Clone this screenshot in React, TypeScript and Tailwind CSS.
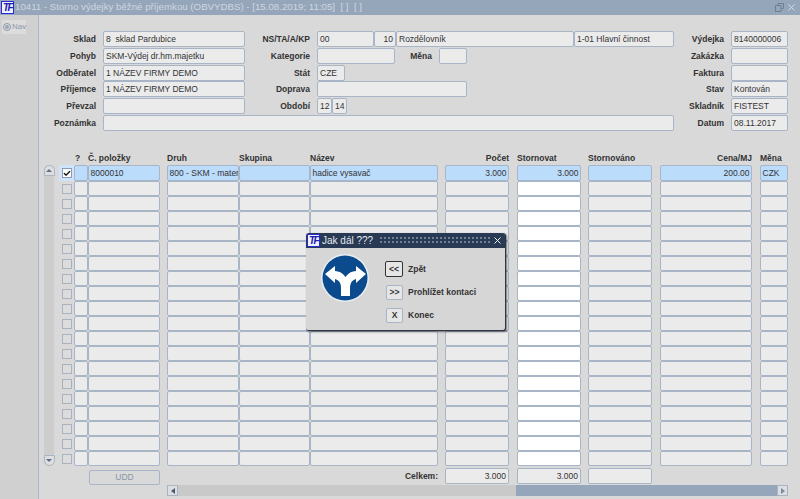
import { Check, X } from 'lucide-react';

const font = 'font-["Liberation_Sans",Arial,sans-serif]';

const fieldBase =
  'flex h-[16px] shrink-0 items-center overflow-hidden whitespace-pre rounded-[2px] border border-[#a8b5c7] bg-[#ebebeb] px-[2px] text-[8.500px] text-[#333]';

function Field({ w, text, right }: { w: string; text?: string; right?: boolean }) {
  return <div className={`${fieldBase} ${w} ${right ? 'justify-end' : ''}`}>{text}</div>;
}

function Label({ w, text }: { w: string; text: string }) {
  return (
    <div className={`${w} shrink-0 whitespace-nowrap pr-[7px] text-right text-[8.5px] font-bold leading-[16px] text-[#333]`}>
      {text}
    </div>
  );
}

const columns = [
  { cls: 'w-[14px]', title: '?', align: 'pl-[1px] text-left' },
  { cls: 'w-[72px]', title: 'Č. položky', align: 'text-left' },
  { cls: 'w-[72px] ml-[7px]', title: 'Druh', align: 'text-left' },
  { cls: 'w-[71px]', title: 'Skupina', align: 'text-left' },
  { cls: 'w-[128px]', title: 'Název', align: 'text-left' },
  { cls: 'w-[64px] ml-[7px]', title: 'Počet', align: 'text-right' },
  { cls: 'w-[64px] ml-[8px]', title: 'Stornovat', align: 'text-left' },
  { cls: 'w-[64px] ml-[7px]', title: 'Stornováno', align: 'text-left' },
  { cls: 'w-[92px] ml-[8px]', title: 'Cena/MJ', align: 'text-right' },
  { cls: 'w-[28px] ml-[8px]', title: 'Měna', align: 'text-left' },
];

const firstRow = ['', '8000010', '800 - SKM - materi', '', 'hadice vysavač', '3.000', '3.000', '', '200.00', 'CZK'];
const rightCols = [5, 6, 8];

function TableRow({ index }: { index: number }) {
  const active = index === 0;
  return (
    <div className={`flex ${active ? 'h-[16px]' : 'h-[15px]'}`}>
      {columns.map((c, i) => (
        <div
          key={c.title}
          className={`flex h-full shrink-0 items-center overflow-hidden whitespace-nowrap rounded-[2px] border border-[#a8b5c7] px-[1.500px] text-[8.500px] text-[#333] ${c.cls} ${
            rightCols.includes(i) ? 'justify-end' : ''
          } ${active ? 'bg-[#bcdcfb]' : i === 6 ? 'bg-white' : 'bg-[#ebebeb]'}`}
        >
          {active ? firstRow[i] : ''}
        </div>
      ))}
    </div>
  );
}

function RoadSign() {
  return (
    <svg width="48" height="48" viewBox="0 0 48 48">
      <circle cx="24" cy="24" r="24" fill="#e8edf2" />
      <circle cx="24" cy="24" r="22.500" fill="#0b4a8d" />
      <path
        d="M20 42 V34 C20 29 18 26 14 25 V29 L4 20 L14 12 V17 C18 17 22 19 24.500 23 C27 19 31 17 35 17 V12 L45 20 L35 29 V25 C31 26 29 29 29 34 V42 Z"
        fill="#fff"
      />
    </svg>
  );
}

function TfLogo() {
  return (
    <div className="flex h-[13px] w-[13px] shrink-0 items-center justify-center border border-[#2a2ad0] bg-[#eef0ff] text-[10px] font-bold italic leading-none tracking-[-1.500px] text-[#2020b0]">
      TF
    </div>
  );
}

function DialogButton({ text, label, focused }: { text: string; label: string; focused?: boolean }) {
  return (
    <div className="flex items-center">
      <div
        className={`flex items-center justify-center rounded-[2px] border bg-[#e6e6e6] text-[8.5px] font-bold text-[#333] ${
          focused ? 'h-[16px] w-[18px] border-[#333]' : 'ml-[1px] h-[15px] w-[17px] border-[#a8b5c7]'
        }`}
      >
        {text}
      </div>
      <span className="ml-[5px] text-[8.5px] font-bold text-[#333]">{label}</span>
    </div>
  );
}

export default function App() {
  return (
    <div className={`relative flex h-[499px] w-[800px] flex-col overflow-hidden bg-[#d9d9d9] ${font}`}>
      <div className="flex h-[15px] shrink-0 items-center bg-[#95a6bb] pl-[1px] pr-[3px]">
        <TfLogo />
        <span className="ml-[1px] whitespace-pre text-[9.700px] text-[#cfd6df]">
          10411 - Storno výdejky běžné příjemkou (OBVYDBS) - [15.08.2019; 11:05]  [ ]  [ ]
        </span>
        <svg className="ml-auto" width="9" height="9" viewBox="0 0 9 9" fill="none" stroke="#6f7f93">
          <path d="M3 2.500 V.5 H8.500 V5.500 H6.500 M.5 2.500 H6 V8.500 H.5 Z" />
        </svg>
        <X className="ml-[2px] text-[#dfe4ea]" size={11} strokeWidth={2} />
      </div>

      <div className="flex min-h-0 flex-1">
        <div className="w-[39px] shrink-0 border-r border-[#a8b5c7] bg-[#d0d0d0] pt-[5px]">
          <div className="ml-[2px] flex h-[14px] w-[24px] items-center bg-[#dcdcdc] pl-[1px]">
            <div className="flex h-[8px] w-[8px] shrink-0 items-center justify-center rounded-full border border-[#8d9bae]">
              <div className="h-[4px] w-[4px] rounded-full bg-[#9aa7b8]" />
            </div>
            <span className="ml-[1px] text-[8px] text-[#8b98aa]">Nav</span>
          </div>
        </div>

        <div className="flex min-w-0 flex-1 flex-col pt-[16px]">
          <div className="grid grid-rows-[17px_17px_16px_17px_17px_16px]">
            <div className="flex">
              <Label w="w-[64px]" text="Sklad" />
              <Field w="w-[142px]" text="8  sklad Pardubice" />
              <Label w="w-[72px]" text="NS/TA/A/KP" />
              <Field w="w-[57px]" text="00" />
              <Field w="w-[22px]" right text="10" />
              <Field w="w-[178px]" text="Rozdělovník" />
              <Field w="w-[100px]" text="1-01 Hlavní činnost" />
              <Label w="w-[57px]" text="Výdejka" />
              <Field w="w-[57px]" text="8140000006" />
            </div>
            <div className="flex">
              <Label w="w-[64px]" text="Pohyb" />
              <Field w="w-[142px]" text="SKM-Výdej dr.hm.majetku" />
              <Label w="w-[72px]" text="Kategorie" />
              <Field w="w-[78px]" />
              <Label w="w-[44px]" text="Měna" />
              <Field w="w-[28px]" />
              <div className="w-[207px] shrink-0" />
              <Label w="w-[57px]" text="Zakázka" />
              <Field w="w-[57px]" />
            </div>
            <div className="flex">
              <Label w="w-[64px]" text="Odběratel" />
              <Field w="w-[142px]" text="1 NÁZEV FIRMY DEMO" />
              <Label w="w-[72px]" text="Stát" />
              <Field w="w-[28px]" text="CZE" />
              <div className="w-[329px] shrink-0" />
              <Label w="w-[57px]" text="Faktura" />
              <Field w="w-[57px]" />
            </div>
            <div className="flex">
              <Label w="w-[64px]" text="Příjemce" />
              <Field w="w-[142px]" text="1 NÁZEV FIRMY DEMO" />
              <Label w="w-[72px]" text="Doprava" />
              <Field w="w-[150px]" />
              <div className="w-[207px] shrink-0" />
              <Label w="w-[57px]" text="Stav" />
              <Field w="w-[57px]" text="Kontován" />
            </div>
            <div className="flex">
              <Label w="w-[64px]" text="Převzal" />
              <Field w="w-[142px]" />
              <Label w="w-[72px]" text="Období" />
              <Field w="w-[15px]" text="12" />
              <Field w="w-[15px]" text="14" />
              <div className="w-[327px] shrink-0" />
              <Label w="w-[57px]" text="Skladník" />
              <Field w="w-[57px]" text="FISTEST" />
            </div>
            <div className="flex">
              <Label w="w-[64px]" text="Poznámka" />
              <Field w="w-[571px]" />
              <Label w="w-[57px]" text="Datum" />
              <Field w="w-[57px]" text="08.11.2017" />
            </div>
          </div>

          <div className="mt-[20px] flex pl-[5px]">
            <div className="mt-[14px] flex h-[301px] w-[10px] shrink-0 flex-col items-center justify-between rounded-full bg-[#cdcdcd]">
              <div className="flex h-[11px] w-[11px] shrink-0 items-center justify-center rounded-t-full border border-[#a8b5c7] bg-[#dedede]">
                <div className="h-0 w-0 border-x-[3px] border-b-[3px] border-x-transparent border-b-[#5d6f87]" />
              </div>
              <div className="flex h-[11px] w-[11px] shrink-0 items-center justify-center rounded-b-full border border-[#a8b5c7] bg-[#dedede]">
                <div className="h-0 w-0 border-x-[3px] border-t-[3px] border-x-transparent border-t-[#5d6f87]" />
              </div>
            </div>

            <div className="ml-[5px] mt-[14px] flex w-[15px] shrink-0 flex-col">
              {Array.from({ length: 20 }, (_, i) => (
                <div key={i} className={`flex items-center justify-center ${i === 0 ? 'h-[16px] bg-[#cfe4fa]' : 'h-[15px]'}`}>
                  <div className={`flex h-[10px] w-[10px] items-center justify-center border ${i === 0 ? 'border-[#8d9bae] bg-white' : 'border-[#a9b3c0] bg-[#dcdcdc]'}`}>
                    {i === 0 && <Check className="text-[#111]" size={9} strokeWidth={4} />}
                  </div>
                </div>
              ))}
            </div>

            <div className="flex flex-col">
              <div className="flex h-[14px]">
                {columns.map((c) => (
                  <div
                    key={c.title}
                    className={`${c.cls} ${c.align} shrink-0 whitespace-nowrap text-[8.5px] font-bold leading-[14px] text-[#333]`}
                  >
                    {c.title}
                  </div>
                ))}
              </div>
              {Array.from({ length: 20 }, (_, i) => (
                <TableRow key={i} index={i} />
              ))}

              <div className="mt-[2px] flex h-[15px]">
                <div className="ml-[15px] mt-[2px] flex h-[15px] w-[71px] shrink-0 items-center justify-center rounded-[2px] border border-[#a8b5c7] text-[8.500px] text-[#8795a8]">
                  UDD
                </div>
                <div className="w-[285px] shrink-0 pr-[7px] text-right text-[8.5px] font-bold leading-[16px] text-[#333]">
                  Celkem:
                </div>
                <Field w="w-[64px]" right text="3.000" />
                <div className="w-[8px] shrink-0" />
                <Field w="w-[64px]" right text="3.000" />
                <div className="w-[7px] shrink-0" />
                <Field w="w-[64px]" />
              </div>
              <div className="ml-[93px] mt-[2px] flex h-[11px] w-[621px]">
                <div className="flex w-[11px] shrink-0 items-center justify-center border border-[#a8b5c7] bg-[#dedede]">
                  <div className="h-0 w-0 border-y-[3px] border-r-[4px] border-y-transparent border-r-[#4a5a70]" />
                </div>
                <div className="w-[338px] shrink-0 bg-[#c9c9c9]" />
                <div className="flex-1 bg-[#95a6bb]" />
                <div className="flex w-[11px] shrink-0 items-center justify-center border border-[#a8b5c7] bg-[#dedede]">
                  <div className="h-0 w-0 border-y-[3px] border-l-[4px] border-y-transparent border-l-[#7d8ba0]" />
                </div>
              </div>
            </div>
          </div>
        </div>
      </div>

      <div className="absolute left-[306px] top-[233px] h-[98px] w-[200px] overflow-hidden rounded-[3px] border-r border-b border-[#30363f] bg-[#d6d6d6] shadow-[1px_1px_2px_rgba(0,0,0,0.5)]">
        <div className="flex h-[15px] items-center bg-[#293a54] pl-[1px] pr-[2px]">
          <TfLogo />
          <span className="ml-[2px] whitespace-nowrap text-[10px] text-[#e6eaf0]">Jak dál ???</span>
          <div className="ml-[6px] h-[9px] flex-1 bg-[radial-gradient(#6f7f96_1px,transparent_1px)] bg-[length:4px_4px]" />
          <X className="ml-[2px] text-white" size={11} strokeWidth={2} />
        </div>
        <div className="flex pl-[15px] pt-[6px]">
          <div className="shrink-0">
            <RoadSign />
          </div>
          <div className="ml-[16px] flex flex-col gap-[8px] pt-[7px]">
            <DialogButton text="<<" label="Zpět" focused />
            <DialogButton text=">>" label="Prohlížet kontaci" />
            <DialogButton text="X" label="Konec" />
          </div>
        </div>
      </div>
    </div>
  );
}
